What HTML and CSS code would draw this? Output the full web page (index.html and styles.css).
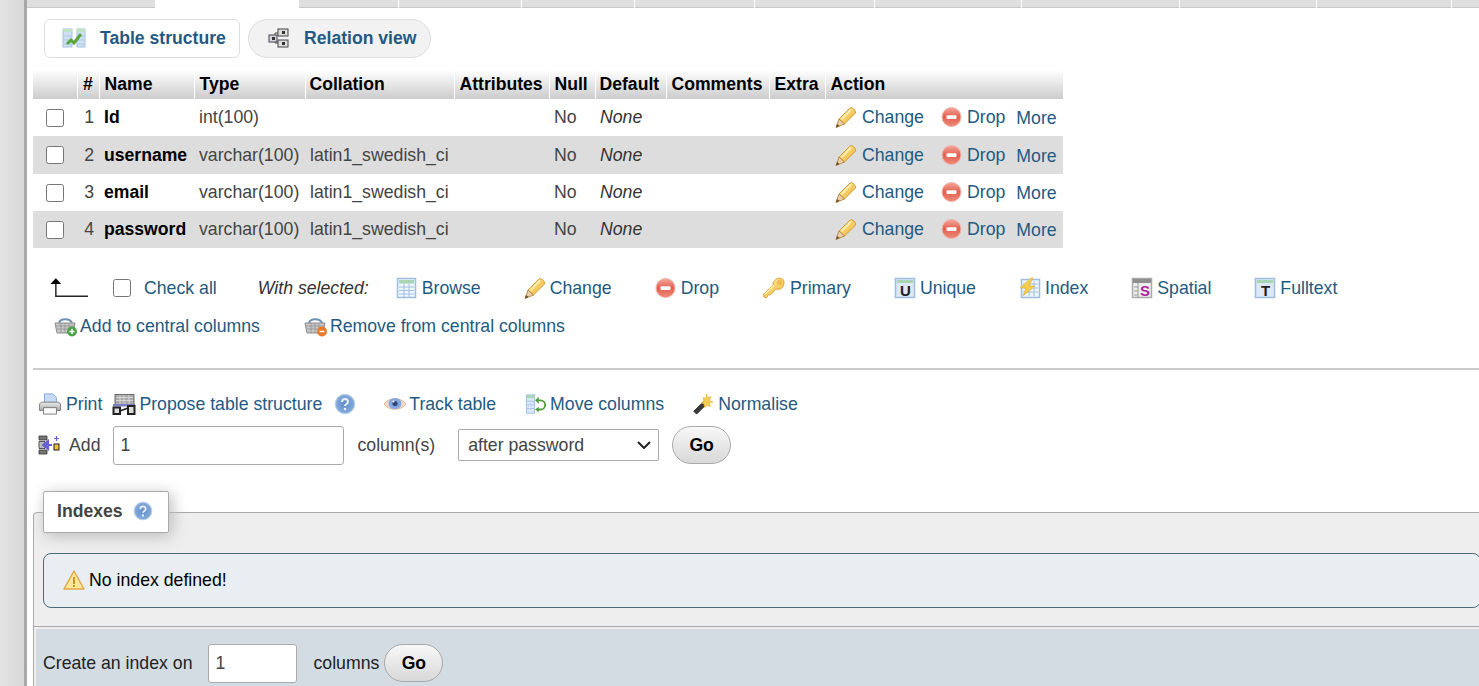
FILE: index.html
```html
<!DOCTYPE html>
<html lang="en">
<head>
<meta charset="utf-8">
<title>Table structure</title>
<link rel="stylesheet" href="styles.css">
</head>
<body>
<svg class="defs" aria-hidden="true">
  <defs>
    <linearGradient id="gPencil" x1="0" y1="0" x2="1" y2="1"><stop offset="0" stop-color="#fde9a0"/><stop offset=".6" stop-color="#f4c95a"/><stop offset="1" stop-color="#dd9a30"/></linearGradient>
    <linearGradient id="gDrop" x1="0" y1="0" x2="0" y2="1"><stop offset="0" stop-color="#f4a79b"/><stop offset=".5" stop-color="#e4604f"/><stop offset="1" stop-color="#ec8a78"/></linearGradient>
    <radialGradient id="gHelp" cx=".5" cy=".5" r=".55"><stop offset="0" stop-color="#5f8cc8"/><stop offset=".75" stop-color="#7ea6d8"/><stop offset="1" stop-color="#b3cbe8"/></radialGradient>
    <linearGradient id="gKey" x1="0" y1="0" x2="1" y2="1"><stop offset="0" stop-color="#fdeb9b"/><stop offset="1" stop-color="#f0b93f"/></linearGradient>
    <linearGradient id="gPrint" x1="0" y1="0" x2="0" y2="1"><stop offset="0" stop-color="#ececec"/><stop offset="1" stop-color="#a9a9a9"/></linearGradient>
    <symbol id="i-structure" viewBox="0 0 24 22">
      <rect x="1" y="2" width="9" height="18" fill="#cfe0f2" stroke="#a3c0e0"/>
      <rect x="15" y="2" width="8" height="18" fill="#cfe0f2" stroke="#a3c0e0"/>
      <rect x="1" y="2" width="9" height="3" fill="#bfe3c5"/>
      <rect x="15" y="2" width="8" height="3" fill="#bfe3c5"/>
      <path d="M2 9h7M2 13h7M2 17h7M16 9h6M16 13h6M16 17h6" stroke="#9dbde2" stroke-width=".7"/>
      <path d="M5 17l4-4 3 3 7-9" fill="none" stroke="#5aa63c" stroke-width="3"/>
    </symbol>
    <symbol id="i-relation" viewBox="0 0 22 22">
      <path d="M10 6H7v10h3" fill="none" stroke="#555"/>
      <rect x="1" y="8" width="8" height="7" fill="#d5d3e6" stroke="#444"/>
      <rect x="10" y="2" width="10" height="7" fill="#ddd" stroke="#444"/>
      <rect x="10" y="13" width="10" height="7" fill="#ddd" stroke="#444"/>
      <rect x="4" y="10" width="3" height="3" fill="#333"/>
      <rect x="14" y="4" width="3" height="3" fill="#333"/>
      <rect x="14" y="15" width="3" height="3" fill="#333"/>
    </symbol>
    <symbol id="i-pencil" viewBox="0 0 22 22">
      <path d="M4 13L15 2c2-1.500 6 2 5.500 5L9.500 18z" fill="url(#gPencil)" stroke="#cf9636" stroke-width=".9"/>
      <path d="M4 13l5.500 5L1 21.500z" fill="#eccfa4" stroke="#b08245" stroke-width=".9"/>
      <path d="M1 21.500l1-3.500 2.500 2z" fill="#6b4a24"/>
      <path d="M6.500 13.500L16 3.500" stroke="#fff4c6" stroke-width="1.400" fill="none"/>
    </symbol>
    <symbol id="i-drop" viewBox="0 0 22 22">
      <circle cx="10.500" cy="11" r="9.500" fill="url(#gDrop)" stroke="#eeb5aa"/>
      <rect x="5.500" y="9.300" width="10" height="3.600" rx="1" fill="#fff"/>
    </symbol>
    <symbol id="i-browse" viewBox="0 0 22 22">
      <rect x="1.500" y="1.500" width="18" height="19" fill="#eef5fc" stroke="#9dbde2" stroke-width="1.500"/>
      <rect x="3" y="3" width="15" height="3.500" fill="#a9d6b2"/>
      <path d="M3 10h15M3 13.500h15M3 17h15M8 6.500V20M13 6.500V20" stroke="#a5c0e0"/>
    </symbol>
    <symbol id="i-key" viewBox="0 0 24 24">
      <path d="M11 8.500C11 3 16 .5 20 1.500s3.500 7 1 10c-2 2-5 2.500-7 1.500L7.500 20l-1.500-1-2 3.500-3-.5L.5 19z" fill="url(#gKey)" stroke="#d99f33"/>
      <circle cx="18" cy="6" r="2" fill="#f4c45a" stroke="#d99f33" stroke-width=".7"/>
      <path d="M3 18L12 9" stroke="#fff3bf" stroke-width="1.200"/>
    </symbol>
    <symbol id="i-unique" viewBox="0 0 22 22">
      <rect x="1.500" y="1.500" width="19" height="19" fill="#dde9f6" stroke="#9dbde2" stroke-width="1.500"/>
      <rect x="3" y="3" width="16" height="3" fill="#a9d6b2"/>
      <text x="11.500" y="19" text-anchor="middle" class="glyph">U</text>
    </symbol>
    <symbol id="i-index" viewBox="0 0 22 22">
      <rect x="2.500" y="2.500" width="18" height="18" fill="#eef5fc" stroke="#9dbde2" stroke-width="1.500"/>
      <path d="M4 7h15M4 11h15M4 15h15M10 4v15M15 4v15" stroke="#a5c0e0"/>
      <path d="M12 1L1 11h6l-3 8 12-10h-6l4-8z" fill="#f5cd4c" stroke="#e0b034" stroke-width=".6"/>
    </symbol>
    <symbol id="i-spatial" viewBox="0 0 22 22">
      <rect x="1.500" y="1.500" width="19" height="19" fill="#eee" stroke="#aaa" stroke-width="1.500"/>
      <rect x="2" y="2" width="18" height="4" fill="#8e8e8e"/>
      <path d="M7 6v15M3 10h4M3 14h4M3 18h4" stroke="#999"/>
      <text x="14" y="19" text-anchor="middle" class="glyph glyph-s">S</text>
    </symbol>
    <symbol id="i-fulltext" viewBox="0 0 22 22">
      <rect x="1.500" y="1.500" width="19" height="19" fill="#dde9f6" stroke="#9dbde2" stroke-width="1.500"/>
      <rect x="3" y="3" width="16" height="3" fill="#a9d6b2"/>
      <text x="11.500" y="19" text-anchor="middle" class="glyph">T</text>
    </symbol>
    <symbol id="i-central-add" viewBox="0 0 24 22">
      <path d="M5 8c1-5 11-5 13 0" fill="none" stroke="#6d8fb8" stroke-width="2"/>
      <path d="M1 8h20l-2 10H3z" fill="#c8c8c8" stroke="#8c8c8c"/>
      <path d="M2 11h18M3 14h16M7 8v10M11 8v10M15 8v10" stroke="#8c8c8c" stroke-width=".7"/>
      <circle cx="18" cy="16.500" r="5" fill="#4da24a"/>
      <path d="M15.500 16.500h5M18 14v5" stroke="#fff" stroke-width="1.500"/>
    </symbol>
    <symbol id="i-central-rm" viewBox="0 0 24 22">
      <path d="M5 8c1-5 11-5 13 0" fill="none" stroke="#6d8fb8" stroke-width="2"/>
      <path d="M1 8h20l-2 10H3z" fill="#c8c8c8" stroke="#8c8c8c"/>
      <path d="M2 11h18M3 14h16M7 8v10M11 8v10M15 8v10" stroke="#8c8c8c" stroke-width=".7"/>
      <circle cx="18" cy="16.500" r="5" fill="#e8792c"/>
      <path d="M15.500 16.500h5" stroke="#fff" stroke-width="1.500"/>
    </symbol>
    <symbol id="i-print" viewBox="0 0 24 24">
      <path d="M6 1h9l4 4v9H6z" fill="#c6dcf4" stroke="#7ea6d2"/>
      <path d="M3.500 10h17c1.500 0 3 1.500 3 3v6H.5v-6c0-1.500 1.500-3 3-3z" fill="url(#gPrint)" stroke="#777"/>
      <rect x="5" y="16" width="14" height="7" fill="#fafafa" stroke="#777"/>
    </symbol>
    <symbol id="i-propose" viewBox="0 0 24 22">
      <rect x="3" y="1.500" width="19" height="10" fill="#a9a9a9" stroke="#6d6d6d"/>
      <path d="M4 4.500h17M4 7.500h17M8 2v9M12 2v9M17 2v9" stroke="#dedede" stroke-width=".8"/>
      <rect x="1" y="11" width="22" height="2.500" fill="#7e7ec8"/>
      <rect x="1.500" y="14.500" width="6.500" height="6.500" fill="#ddd" stroke="#222" stroke-width="2"/>
      <rect x="16" y="13" width="6.500" height="8" fill="#ddd" stroke="#222" stroke-width="2"/>
      <path d="M8 18l8-3" stroke="#222" stroke-width="1.800"/>
    </symbol>
    <symbol id="i-help" viewBox="0 0 22 22">
      <circle cx="11" cy="11" r="9.800" fill="url(#gHelp)" stroke="#b8cde8" stroke-width="1"/>
      <path d="M8 9c0-4 6-4 6 0 0 2-3 2-3 4" fill="none" stroke="#e8eff8" stroke-width="2"/>
      <circle cx="11" cy="16" r="1.300" fill="#e8eff8"/>
    </symbol>
    <symbol id="i-eye" viewBox="0 0 24 22">
      <path d="M1 11c5-7 17-7 22 0-5 7-17 7-22 0z" fill="#f3ddc8" stroke="#d9b294"/>
      <ellipse cx="12" cy="10.500" rx="6.500" ry="5.500" fill="#86a6e0"/>
      <circle cx="12" cy="10.500" r="2.600" fill="#2f4478"/>
      <circle cx="10.500" cy="8.500" r="1" fill="#fff"/>
    </symbol>
    <symbol id="i-move" viewBox="0 0 24 24">
      <rect x="1.500" y="2" width="9" height="20" fill="#d7e7f8" stroke="#9dbde2"/>
      <rect x="2" y="2.500" width="8" height="3" fill="#a9d6b2"/>
      <path d="M2 9h8M2 13h8M2 17h8" stroke="#a5c0e0"/>
      <path d="M14 8h3a5 5 0 0 1 0 10h-4" fill="none" stroke="#4e9f3d" stroke-width="2"/>
      <path d="M15 4l-4 4 4 4zM15 15l-4 3 4 3z" fill="#4e9f3d"/>
    </symbol>
    <symbol id="i-wand" viewBox="0 0 24 24">
      <path d="M2 20L13 9l3 3L5 23z" fill="#3a3a3a" stroke="#222"/>
      <path d="M16 1l1 4 4-1-2 4 4 2-4 1 1 4-4-2-2 3-1-4-3-1 3-2-1-4 3 1z" fill="#f3cc52" stroke="#e0ac30" stroke-width=".6"/>
    </symbol>
    <symbol id="i-addcol" viewBox="0 0 22 22">
      <path d="M1 2h8v4H1zM1 16h8v4H1z" fill="#777" stroke="#333" stroke-width=".8"/>
      <path d="M1 7.500h6v7H1z" fill="#bbb" stroke="#333" stroke-width=".8"/>
      <path d="M14 11H8M10 7l-5 4 5 4z" fill="#6a5fd0" stroke="#6a5fd0" stroke-width="2"/>
      <rect x="16" y="10" width="5" height="6" fill="#f0c13a" stroke="#222"/>
      <path d="M18.500 2v5M16 4.500h5" stroke="#6a5fd0" stroke-width="1.200"/>
    </symbol>
    <symbol id="i-warn" viewBox="0 0 22 22">
      <path d="M11 2L21 20H1z" fill="#fbe79a" stroke="#e0a84a" stroke-width="1.500" stroke-linejoin="round"/>
      <rect x="10" y="8" width="2" height="7" fill="#c9961f"/>
      <rect x="10" y="16" width="2" height="2" fill="#c9961f"/>
    </symbol>
  </defs>
</svg>

<div class="page">
  <aside class="sidebar"></aside>
  <main class="main">
    <nav class="tabs" aria-label="Table tabs">
      <span class="tab"></span><span class="tab tab-active"></span><span class="tab"></span><span class="tab"></span><span class="tab"></span><span class="tab"></span><span class="tab"></span><span class="tab"></span><span class="tab"></span><span class="tab"></span><span class="tab"></span><span class="tab"></span>
    </nav>

    <div class="subnav">
      <a class="subtab subtab-active"><svg class="ic ic-24"><use href="#i-structure"/></svg>Table structure</a>
      <a class="subtab subtab-pill"><svg class="ic"><use href="#i-relation"/></svg>Relation view</a>
    </div>

    <table class="grid">
      <colgroup>
        <col class="c-check"><col class="c-num"><col class="c-name"><col class="c-type"><col class="c-coll"><col class="c-attr"><col class="c-null"><col class="c-def"><col class="c-comm"><col class="c-extra"><col class="c-act">
      </colgroup>
      <thead>
        <tr><th></th><th class="center">#</th><th>Name</th><th>Type</th><th class="th-tight">Collation</th><th>Attributes</th><th>Null</th><th class="th-tight">Default</th><th>Comments</th><th>Extra</th><th>Action</th></tr>
      </thead>
      <tbody>
        <tr>
          <td class="center"><input class="check" type="checkbox" aria-label="Select Id"></td><td class="num">1</td><td class="fname">Id</td><td>int(100)</td><td></td><td></td><td>No</td><td><em>None</em></td><td></td><td></td>
          <td><div class="actions"><a class="act act-change"><svg class="ic"><use href="#i-pencil"/></svg>Change</a><a class="act act-drop"><svg class="ic"><use href="#i-drop"/></svg>Drop</a><a class="more">More</a></div></td>
        </tr>
        <tr class="even row-tall">
          <td class="center"><input class="check" type="checkbox" aria-label="Select username"></td><td class="num">2</td><td class="fname">username</td><td>varchar(100)</td><td>latin1_swedish_ci</td><td></td><td>No</td><td><em>None</em></td><td></td><td></td>
          <td><div class="actions"><a class="act act-change"><svg class="ic"><use href="#i-pencil"/></svg>Change</a><a class="act act-drop"><svg class="ic"><use href="#i-drop"/></svg>Drop</a><a class="more">More</a></div></td>
        </tr>
        <tr>
          <td class="center"><input class="check" type="checkbox" aria-label="Select email"></td><td class="num">3</td><td class="fname">email</td><td>varchar(100)</td><td>latin1_swedish_ci</td><td></td><td>No</td><td><em>None</em></td><td></td><td></td>
          <td><div class="actions"><a class="act act-change"><svg class="ic"><use href="#i-pencil"/></svg>Change</a><a class="act act-drop"><svg class="ic"><use href="#i-drop"/></svg>Drop</a><a class="more">More</a></div></td>
        </tr>
        <tr class="even">
          <td class="center"><input class="check" type="checkbox" aria-label="Select password"></td><td class="num">4</td><td class="fname">password</td><td>varchar(100)</td><td>latin1_swedish_ci</td><td></td><td>No</td><td><em>None</em></td><td></td><td></td>
          <td><div class="actions"><a class="act act-change"><svg class="ic"><use href="#i-pencil"/></svg>Change</a><a class="act act-drop"><svg class="ic"><use href="#i-drop"/></svg>Drop</a><a class="more">More</a></div></td>
        </tr>
      </tbody>
    </table>

    <div class="bulk">
      <svg class="arrow" viewBox="0 0 40 20"><path d="M6 5.500V18.500H39" fill="none" stroke="#222" stroke-width="1.500"/><path d="M6 0L0.500 6h11z" fill="#000"/></svg>
      <input class="check check-all" type="checkbox" aria-label="Check all">
      <a class="link link-all">Check all</a>
      <em class="with">With selected:</em>
      <a class="link item item-first"><svg class="ic"><use href="#i-browse"/></svg>Browse</a>
      <a class="link item"><svg class="ic"><use href="#i-pencil"/></svg>Change</a>
      <a class="link item"><svg class="ic"><use href="#i-drop"/></svg>Drop</a>
      <a class="link item"><svg class="ic ic-24"><use href="#i-key"/></svg>Primary</a>
      <a class="link item"><svg class="ic"><use href="#i-unique"/></svg>Unique</a>
      <a class="link item"><svg class="ic"><use href="#i-index"/></svg>Index</a>
      <a class="link item"><svg class="ic"><use href="#i-spatial"/></svg>Spatial</a>
      <a class="link item"><svg class="ic"><use href="#i-fulltext"/></svg>Fulltext</a>
    </div>
    <div class="central">
      <a class="link item"><svg class="ic ic-24"><use href="#i-central-add"/></svg>Add to central columns</a>
      <a class="link item"><svg class="ic ic-24"><use href="#i-central-rm"/></svg>Remove from central columns</a>
    </div>

    <hr class="rule">

    <div class="tools">
      <a class="link item"><svg class="ic ic-24"><use href="#i-print"/></svg>Print</a>
      <a class="link item tool-propose"><svg class="ic ic-24"><use href="#i-propose"/></svg>Propose table structure</a>
      <svg class="ic tool-help"><use href="#i-help"/></svg>
      <a class="link item tool-track"><svg class="ic ic-24"><use href="#i-eye"/></svg>Track table</a>
      <a class="link item tool-move"><svg class="ic ic-24"><use href="#i-move"/></svg>Move columns</a>
      <a class="link item tool-norm"><svg class="ic ic-24"><use href="#i-wand"/></svg>Normalise</a>
    </div>

    <form class="addcol">
      <svg class="ic"><use href="#i-addcol"/></svg>
      <span class="add-label">Add</span>
      <input class="field field-wide" type="text" value="1" aria-label="Columns to add">
      <span class="add-unit">column(s)</span>
      <select class="pick" aria-label="Position"><option>after password</option></select>
      <button class="go" type="button">Go</button>
    </form>

    <fieldset class="box">
      <legend class="box-title">Indexes <svg class="ic legend-help"><use href="#i-help"/></svg></legend>
      <div class="box-body">
        <div class="notice"><svg class="ic"><use href="#i-warn"/></svg>No index defined!</div>
      </div>
      <div class="footer">
        <span>Create an index on</span>
        <input class="field field-small" type="text" value="1" aria-label="Index columns">
        <span class="footer-unit">columns</span>
        <button class="go go-footer" type="button">Go</button>
      </div>
    </fieldset>
  </main>
</div>
</body>
</html>
```

FILE: styles.css
```css
* { box-sizing: border-box; }
html, body { margin: 0; height: 100%; overflow: hidden; }
body {
  background: #fff;
  color: #444;
  font-family: "Liberation Sans", Arial, sans-serif;
  font-size: 17.7px;
  line-height: 22px;
}
.defs { position: absolute; width: 0; height: 0; }
.glyph { font: bold 15px "Liberation Sans", sans-serif; fill: #222; }
.glyph-s { fill: #b0269c; }

.page { display: flex; height: 686px; overflow: hidden; }
.sidebar {
  flex: 0 0 27px;
  background: linear-gradient(to right, #e3e3e3, #d9d9d9);
  border-right: 3px solid #a9a9a9;
}
.main { flex: 1; min-width: 0; overflow: hidden; }

.ic { width: 22px; height: 22px; flex: none; display: block; }
.ic-24 { width: 24px; }

.tabs {
  display: grid;
  grid-template-columns: 128px 142px 99px 122px 112px 119px 119px 146px 157px 136px 134px 1fr;
  column-gap: 1px;
  height: 8px;
}
.tab { background: #dfdfdf; border-bottom: 1px solid #c8c8c8; }
.tab-active { background: #fff; border-bottom: 0; }

.subnav { display: flex; gap: 8px; margin: 11px 0 0 17px; height: 39px; }
.subtab {
  display: flex;
  align-items: center;
  gap: 14px;
  padding-bottom: 2px;
  font-size: 17.6px;
  font-weight: bold;
  color: #235a81;
  border: 1px solid #ddd;
}
.subtab-active { width: 196px; padding-left: 17px; border-radius: 6px; background: #fff; }
.subtab-pill { width: 183px; padding-left: 19px; border-radius: 20px; background: #f2f2f2; }

.grid {
  margin: 12px 0 0 6px;
  width: 1030px;
  table-layout: fixed;
  border-collapse: collapse;
}
.c-check { width: 44px; }
.c-num { width: 22px; }
.c-name { width: 95px; }
.c-type { width: 111px; }
.c-coll { width: 149px; }
.c-attr { width: 95px; }
.c-null { width: 46px; }
.c-def { width: 71px; }
.c-comm { width: 103px; }
.c-extra { width: 56px; }
.c-act { width: 238px; }

.grid th {
  height: 29px;
  padding: 0 0 2px 5px;
  color: #000;
  font-size: 17.6px;
  font-weight: bold;
  text-align: left;
  white-space: nowrap;
  background: linear-gradient(#fff, #ccc);
  border-right: 1px solid #fff;
}
.grid th:last-child { border-right: 0; }
.grid th.center { padding: 0 0 2px; text-align: center; }
.grid th.th-tight { padding-left: 4px; }
.grid td {
  height: 37px;
  padding: 0 0 1px 5px;
  white-space: nowrap;
  overflow: hidden;
}
.row-tall td { height: 38px; padding-bottom: 0; }
.grid td.center { padding: 0 0 2px; text-align: center; }
.grid td.num { padding: 0 5px 1px 0; text-align: right; }
.grid td.fname { color: #000; font-size: 17.6px; font-weight: bold; }
.even td { background: #ddd; }
.grid em { color: #333; }

.check {
  width: 18px;
  height: 18px;
  margin: 0;
  vertical-align: middle;
}

.actions { display: flex; align-items: center; padding-left: 5px; }
.act { display: flex; align-items: center; color: #235a81; }
.act-change { gap: 5px; }
.act-drop { gap: 4px; margin-left: 17px; }
.more { margin-left: 11px; padding-top: 2px; color: #235a81; }

.link { color: #235a81; }
.item { display: flex; align-items: center; gap: 4px; }

.bulk { display: flex; align-items: center; height: 22px; margin: 29px 0 0 23px; }
.arrow { width: 39px; height: 20px; flex: none; }
.check-all { margin-left: 24px; }
.link-all { margin-left: 13px; }
.with { margin-left: 41px; color: #333; }
.bulk .item { margin-left: 43px; }
.bulk .item-first { margin-left: 27px; }

.central { display: flex; gap: 44px; height: 22px; margin: 16px 0 0 27px; }
.central .item { gap: 2px; }

.rule { height: 0; margin: 31px 0 0 6px; border: 0; border-top: 2px solid #ccc; }

.tools { display: flex; align-items: center; height: 22px; margin: 23px 0 0 11px; }
.tool-propose { margin-left: 10px; gap: 3px; }
.tool-help { margin-left: 12px; }
.tool-track { margin-left: 27px; gap: 2px; }
.tool-move { margin-left: 28px; gap: 2px; }
.tool-norm { margin-left: 27px; gap: 3px; }

.addcol { display: flex; align-items: center; height: 40px; margin: 10px 0 0 11px; }
.add-label { margin-left: 9px; }
.field {
  height: 39px;
  padding: 0 6px;
  border: 1px solid #aaa;
  border-radius: 3px;
  background: #fff;
  color: #444;
  font: inherit;
}
.field-wide { width: 231px; margin-left: 13px; }
.add-unit { margin-left: 13px; }
.pick {
  width: 201px;
  height: 32px;
  margin-left: 23px;
  padding-left: 9px;
  appearance: none;
  border: 1px solid #aaa;
  border-radius: 2px;
  background: #fff url("data:image/svg+xml,%3Csvg xmlns='http://www.w3.org/2000/svg' width='14' height='8'%3E%3Cpath d='M1 1l6 6 6-6' fill='none' stroke='%23222' stroke-width='2'/%3E%3C/svg%3E") no-repeat right 7px center;
  color: #444;
  font: inherit;
}
.go {
  width: 59px;
  height: 38px;
  padding: 0;
  margin-left: 13px;
  border: 1px solid #aaa;
  border-radius: 20px;
  background: linear-gradient(#f8f8f8, #d8d8d8);
  color: #000;
  font: bold 17.6px "Liberation Sans", sans-serif;
}

.box {
  margin: 26px -12px 0 6px;
  padding: 0;
  height: 240px;
  min-width: 0;
  background: #eee;
  border: 1px solid #aaa;
  border-radius: 4px 0 0 0;
}
.box-title {
  display: flex;
  align-items: center;
  gap: 10px;
  width: 126px;
  height: 42px;
  margin-left: 9px;
  padding: 0 0 2px 13px;
  font-size: 17.6px;
  font-weight: bold;
  color: #444;
  background: #fff;
  border: 1px solid #aaa;
  border-radius: 2px;
  box-shadow: 3px 3px 15px #bbb;
}
.legend-help { width: 20px; height: 20px; }
.box-body {
  padding: 20px 9px 18px;
  border-bottom: 1px solid #aaa;
}
.notice {
  display: flex;
  align-items: center;
  gap: 4px;
  height: 55px;
  padding: 0 0 2px 19px;
  color: #000;
  background: #e8eef1;
  border: 1px solid #4a6b78;
  border-radius: 8px;
}
.footer {
  display: flex;
  align-items: center;
  height: 68px;
  margin: 2px 0 0 2px;
  padding: 0 0 0 7px;
  color: #222;
  background: #d3dce3;
}
.field-small { width: 89px; margin-left: 16px; }
.footer-unit { margin-left: 16px; }
.go-footer { margin-left: 5px; }
```
